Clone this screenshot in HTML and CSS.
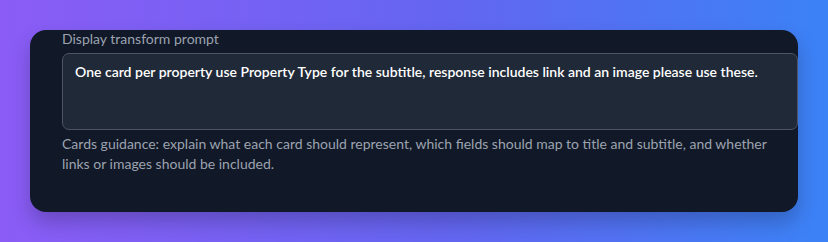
FILE: index.html
```html
<!DOCTYPE html>
<html lang="en">
<head>
<meta charset="utf-8">
<title>Display transform prompt</title>
<link rel="stylesheet" href="styles.css">
</head>
<body>
<div class="stage">
  <section class="card">
    <label class="field-label" for="prompt">Display transform prompt</label>
    <div class="textarea" id="prompt">One card per property use Property Type for the subtitle, response includes link and an image please use these.</div>
    <p class="help">Cards guidance: explain what each card should represent, which fields should map to title and subtitle, and whether links or images should be included.</p>
  </section>
</div>
</body>
</html>
```

FILE: styles.css
```css
html, body {
  margin: 0;
  padding: 0;
}
body {
  width: 828px;
  height: 242px;
  overflow: hidden;
  font-family: Lato, "Noto Sans", sans-serif;
}
.stage {
  height: 242px;
  box-sizing: border-box;
  padding: 30px 30px 0 30px;
  background: linear-gradient(90deg, #8b5cf6 0%, #6366f1 55%, #3b82f6 100%);
}
.card {
  height: 182px;
  box-sizing: border-box;
  background: #111827;
  border-radius: 16px;
  padding: 0 0 0 32px;
  box-shadow: 0 10px 20px rgba(0, 0, 0, 0.22);
  display: flex;
  flex-direction: column;
}
.field-label {
  display: block;
  color: #9ca3af;
  font-size: 14px;
  line-height: 18px;
  margin-top: 0;
  margin-bottom: 5px;
}
.textarea {
  height: 77px;
  box-sizing: border-box;
  background: #1f2937;
  border: 1px solid #4b5563;
  border-radius: 7px;
  padding: 8px 12px;
  color: #ffffff;
  font-size: 14px;
  font-weight: 600;
  line-height: 20px;
}
.help {
  margin: 4px 20px 0 0;
  color: #9ca3af;
  font-size: 14px;
  line-height: 20px;
}
```
